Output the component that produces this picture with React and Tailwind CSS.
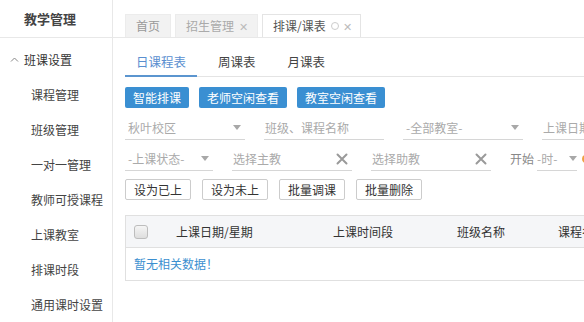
import React from 'react';

const font = { fontFamily: '"Noto Sans CJK SC", "Noto Sans", sans-serif' };

function Caret() {
  return <span className="inline-block w-0 h-0 border-l-[4px] border-r-[4px] border-t-[5px] border-l-transparent border-r-transparent border-t-[#a8a8a8]" />;
}

function ClearX() {
  return (
    <svg width="12" height="12" viewBox="0 0 12 12" className="shrink-0">
      <path d="M1.5 1.5 L10.5 10.5 M10.5 1.5 L1.5 10.5" stroke="#9a9a9a" strokeWidth="2" strokeLinecap="round" />
    </svg>
  );
}

function SelectField({ label, width }) {
  return (
    <div className={`${width} h-[24px] border-b border-[#d6d6d6] flex items-center justify-between shrink-0`}>
      <span className="text-[12px] text-[#aaa] pl-[3px]">{label}</span>
      <span className="mr-[4px] flex"><Caret /></span>
    </div>
  );
}

function InputField({ label, width, clear }) {
  return (
    <div className={`${width} h-[24px] border-b border-[#d6d6d6] flex items-center justify-between shrink-0`}>
      <span className="text-[12px] text-[#aaa] pl-[1px]">{label}</span>
      {clear && <span className="mr-[4px] flex"><ClearX /></span>}
    </div>
  );
}

function App() {
  const menu = ['课程管理', '班级管理', '一对一管理', '教师可授课程', '上课教室', '排课时段', '通用课时设置'];

  return (
    <div className="w-[584px] h-[322px] overflow-hidden flex bg-white text-[#333]" style={font}>
      {/* 左侧菜单 */}
      <aside className="w-[113px] shrink-0 border-r border-[#e8e8e8]">
        <div className="h-[38px] border-b border-[#e8e8e8] pl-[24px] flex items-center text-[13px] font-bold text-[#444]">教学管理</div>
        <div className="mt-[4px]">
          <div className="h-[35px] flex items-center pl-[10px] text-[12px] text-[#333]">
            <svg width="9" height="7" viewBox="0 0 9 7" className="mr-[5px]">
              <path d="M1 5.5 L4.5 2 L8 5.5" fill="none" stroke="#888" strokeWidth="1" />
            </svg>
            班课设置
          </div>
          {menu.map((m) => (
            <div key={m} className="h-[35px] flex items-center pl-[31px] text-[12px] text-[#444]">{m}</div>
          ))}
        </div>
      </aside>

      {/* 主内容 */}
      <main className="flex-1 min-w-0 overflow-hidden">
        <div className="h-[38px] border-b border-[#e8e8e8] flex items-end pl-[12px] gap-[4px]">
          <div className="h-[23px] px-[10px] flex items-center bg-[#f2f2f2] border border-b-0 border-[#ececec] text-[12px] text-[#999]">首页</div>
          <div className="h-[23px] pl-[10px] pr-[9px] flex items-center bg-[#f2f2f2] border border-b-0 border-[#ececec] text-[12px] text-[#aaa] gap-[5px]">
            招生管理<span className="text-[11px] text-[#bbb]">✕</span>
          </div>
          <div className="h-[23px] pl-[10px] pr-[8px] flex items-center bg-white border border-b-0 border-[#e4e4e4] text-[12px] text-[#555] gap-[4px]">
            排课/课表
            <span className="w-[8px] h-[8px] rounded-full border border-[#ccc] ml-[1px]" />
            <span className="text-[11px] text-[#bbb]">✕</span>
          </div>
        </div>

        <div className="pl-[12px]">
          <div className="h-[39px] border-b border-[#e4e4e4] flex gap-[10px]">
            <div className="px-[11px] h-[39px] pt-[15px] border-b-2 border-[#5b95cf] text-[12.5px] text-[#5a8fd0] -mb-[1px]">日课程表</div>
            <div className="px-[11px] h-[39px] pt-[15px] text-[12.5px] text-[#444]">周课表</div>
            <div className="px-[11px] h-[39px] pt-[15px] text-[12.5px] text-[#444]">月课表</div>
          </div>

          <div className="flex gap-[10px] mt-[10px]">
            {['智能排课', '老师空闲查看', '教室空闲查看'].map((b) => (
              <button key={b} className="h-[21px] px-[8px] bg-[#3a8fd2] text-white text-[12px] rounded-[2px] leading-[21px]">{b}</button>
            ))}
          </div>

          <div className="flex items-end mt-[8px] gap-[19px] whitespace-nowrap">
            <SelectField label="秋叶校区" width="w-[120px]" />
            <InputField label="班级、课程名称" width="w-[120px]" />
            <SelectField label="-全部教室-" width="w-[120px]" />
            <InputField label="上课日期" width="w-[120px]" />
          </div>

          <div className="flex items-end mt-[7px] gap-[19px] whitespace-nowrap">
            <SelectField label="-上课状态-" width="w-[88px]" />
            <InputField label="选择主教" width="w-[120px]" clear />
            <InputField label="选择助教" width="w-[120px]" clear />
            <div className="flex items-end gap-[3px] shrink-0">
              <span className="text-[12px] text-[#888] h-[24px] flex items-center">开始</span>
              <div className="w-[40px] h-[24px] border-b border-[#d6d6d6] flex items-center justify-between">
                <span className="text-[12px] text-[#aaa]">-时-</span>
                <Caret />
              </div>
              <span className="h-[24px] flex items-center ml-[2px]">
                <span className="w-[8px] h-[8px] rounded-full border-2 border-[#f0a040]" />
              </span>
            </div>
          </div>

          <div className="flex gap-[11px] mt-[8px]">
            {['设为已上', '设为未上', '批量调课', '批量删除'].map((b) => (
              <button key={b} className="h-[21px] px-[8px] bg-white border border-[#ccc] text-[12px] text-[#333] rounded-[2px] leading-[19px]">{b}</button>
            ))}
          </div>

          <div className="mt-[15px] w-[600px] border border-[#e0e0e0]">
            <div className="h-[32px] bg-[#f5f6f8] border-b border-[#e0e0e0] flex items-center text-[12px] text-[#333] whitespace-nowrap">
              <div className="w-[40px] pl-[8px] flex">
                <span className="w-[14px] h-[14px] rounded-[3px] border border-[#bdbdbd] bg-gradient-to-b from-[#f5f5f5] to-[#dedede]" />
              </div>
              <div className="w-[157px] pl-[10px]">上课日期/星期</div>
              <div className="w-[124px] pl-[10px]">上课时间段</div>
              <div className="w-[101px] pl-[10px]">班级名称</div>
              <div className="pl-[10px]">课程名称</div>
            </div>
            <div className="h-[32px] flex items-center pl-[8px] text-[12px] text-[#3b8fd0]">暂无相关数据！</div>
          </div>
        </div>
      </main>
    </div>
  );
}

export default App;
